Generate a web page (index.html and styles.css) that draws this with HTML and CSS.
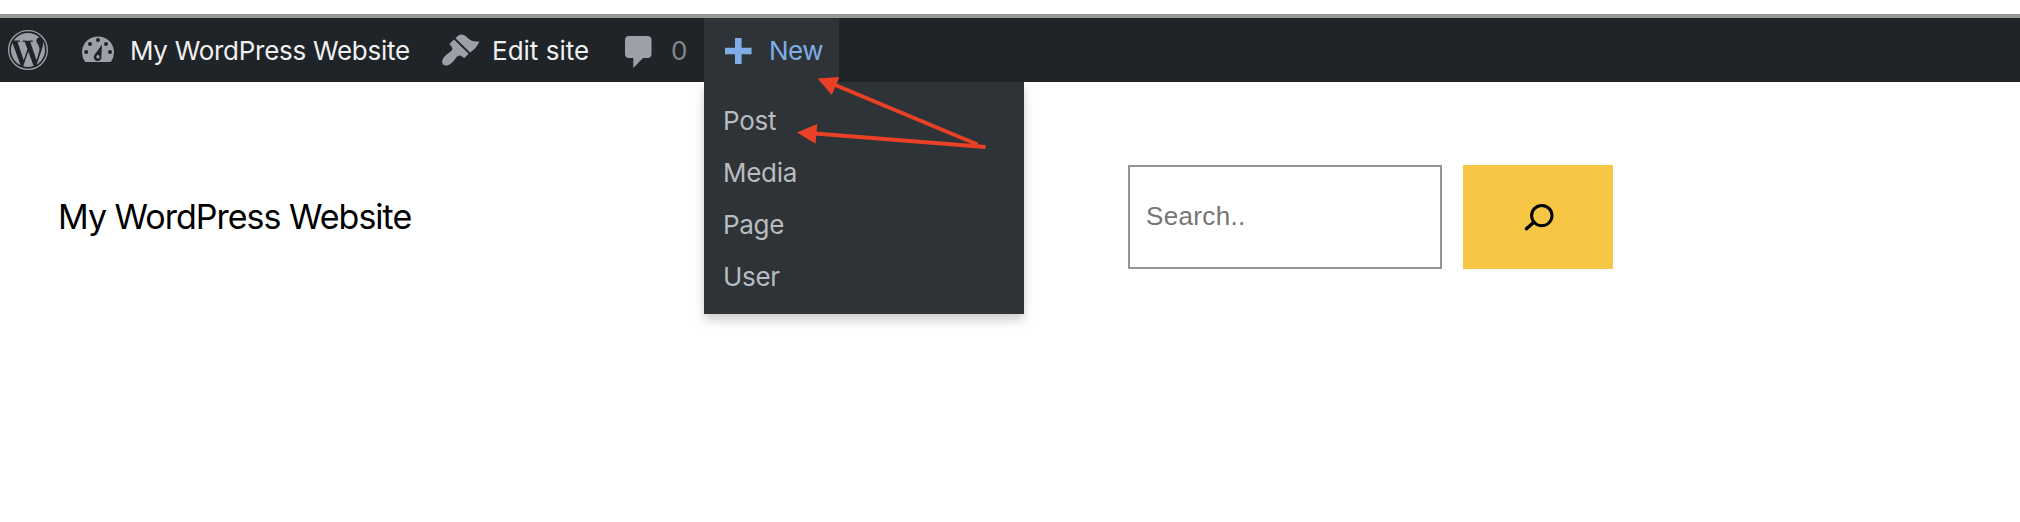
FILE: index.html
```html
<!DOCTYPE html>
<html lang="en">
<head>
<meta charset="utf-8">
<title>My WordPress Website</title>
<link rel="stylesheet" href="styles.css">
</head>
<body>
<nav class="adminbar">
  <a class="item item-logo">
    <svg width="40" height="40" viewBox="0 0 24 24" fill="#9ca1a7">
      <circle cx="12" cy="12" r="11.6" fill="none" stroke="#9ca1a7" stroke-width=".8"/>
      <g transform="translate(12 12) scale(.945) translate(-12 -12)">
        <path d="M21.469 6.825c.84 1.537 1.318 3.3 1.318 5.175 0 3.979-2.156 7.456-5.363 9.325l3.295-9.527c.615-1.54.82-2.771.82-3.864 0-.405-.026-.78-.07-1.11m-7.981.105c.647-.03 1.232-.105 1.232-.105.582-.075.514-.93-.067-.899 0 0-1.755.135-2.88.135-1.064 0-2.85-.15-2.85-.15-.585-.03-.661.855-.075.885 0 0 .54.061 1.125.09l1.68 4.605-2.37 7.08L5.354 6.9c.649-.03 1.234-.1 1.234-.1.585-.075.516-.93-.065-.896 0 0-1.746.138-2.874.138-.2 0-.438-.008-.69-.015C4.911 3.15 8.235 1.215 12 1.215c2.809 0 5.365 1.072 7.286 2.833-.046-.003-.091-.009-.141-.009-1.06 0-1.812.923-1.812 1.914 0 .89.513 1.643 1.06 2.531.411.72.89 1.643.89 2.977 0 .915-.354 1.994-.821 3.479l-1.075 3.585-3.9-11.61.001.014zM12 22.784c-1.059 0-2.081-.153-3.048-.437l3.237-9.406 3.315 9.087c.024.053.05.101.078.149-1.12.393-2.325.609-3.582.609M1.211 12c0-1.564.336-3.05.935-4.39L7.29 21.709C3.694 19.96 1.212 16.271 1.211 12"/>
      </g>
    </svg>
  </a>
  <a class="item item-site">
    <svg width="32" height="28" viewBox="0 0 32 28">
      <path d="M3.2 26A16 16 0 1 1 28.8 26Z" fill="#9ca1a7"/>
      <g fill="#1f2428">
        <circle cx="16" cy="4" r="2"/><circle cx="8" cy="8" r="2"/><circle cx="24" cy="8" r="2"/>
        <circle cx="4.2" cy="16" r="2"/><circle cx="28" cy="16" r="2"/>
        <path d="M20 8.5L19.4 20.2A3.9 3.9 0 1 1 12.4 19Z"/>
      </g>
      <circle cx="16" cy="20.8" r="1.7" fill="#9ca1a7"/>
    </svg>
    <span class="label label-site">My WordPress Website</span>
  </a>
  <a class="item item-edit">
    <svg width="38" height="32" viewBox="0 0 38 32" fill="#9ca1a7">
      <path d="M13.6 4.2C15.6 1.6 17.2.4 19.6.4C26.5.8 25.5 8.8 37.4 7.4C35.8 11.6 32.5 15.5 28 18.5Z"/>
      <path d="M12 5.6L26.6 19.8L22.8 23.7C21.5 24.2 20.5 22.7 18.2 21.6C15.4 21.6 14.3 23.5 12 26.6C9.3 30.1 6.6 31.5 4 31.5C1.2 31.5 0 29.8.1 27.2C.7 23.8 3.3 21.5 6.6 19C9.5 17 10.6 16.1 10.3 14.2C10 12.3 7.6 11.1 7.5 9.8Z"/>
    </svg>
    <span class="label label-edit">Edit site</span>
  </a>
  <a class="item item-comments">
    <svg width="27" height="32" viewBox="0 0 27 32"><path d="M4 0H22.5Q26.5 0 26.5 4V18Q26.5 22 22.5 22H18L8.3 32V22H4Q0 22 0 18V4Q0 0 4 0Z" fill="#9ca1a7"/></svg>
    <span class="label label-count">0</span>
  </a>
  <div class="item item-new">
    <svg width="27" height="26" viewBox="0 0 27 26"><path d="M10 0H16.6V9.7H26.6V16.3H16.6V26H10V16.3H0V9.7H10Z" fill="#7fade6"/></svg>
    <span class="label label-new">New</span>
    <ul class="menu">
      <li>Post</li>
      <li>Media</li>
      <li>Page</li>
      <li>User</li>
    </ul>
  </div>
</nav>
<header class="site-header">
  <h1 class="site-title">My WordPress Website</h1>
  <form class="search">
    <div class="field">Search..</div>
    <button class="submit" type="button" aria-label="Search">
      <svg width="32" height="28" viewBox="-1 0 32 28" fill="none" stroke="#000" stroke-linecap="round"><circle cx="18.8" cy="12.6" r="10.2" stroke-width="3"/><path d="M10.8 19.2L3.5 25.8" stroke-width="3.4"/></svg>
    </button>
  </form>
</header>
<svg class="arrows" width="190" height="74" viewBox="0 0 190 74">
  <g fill="#ea4126">
    <path d="M20.5 5.5L42.4 4L34.8 22Z"/>
    <path d="M0 59.5L20.3 51L18.5 70.7Z"/>
  </g>
  <g fill="none" stroke="#ea4126" stroke-width="4"><path d="M37 11.5L180.5 71.5"/><path d="M18 60.4L188.5 74"/></g>
</svg>
</body>
</html>
```
FILE: styles.css
```css
* { box-sizing: border-box; }
html { height: 522px; background: #fff; }
body { display: flow-root; height: 522px; margin: 0; font-family: Inter, "Liberation Sans", sans-serif; }
svg { display: block; flex: none; }

.adminbar {
  display: flex;
  height: 68px;
  margin-top: 14px;
  border-top: 4px solid #979997;
  background: #1f2428;
  font-size: 26px;
  line-height: 64px;
  color: #f0f0f1;
}
.item { display: flex; align-items: center; height: 64px; }
.item-logo { width: 82px; padding-left: 8px; }
.item-site { width: 360px; gap: 16px; }
.item-edit { width: 183px; gap: 12px; }
.item-edit svg { margin-top: -1px; }
.item-comments { width: 79px; gap: 19px; }
.item-comments svg { margin-top: 4px; }
.item-new { position: relative; width: 135px; padding-left: 21px; gap: 17px; background: #2e3337; color: #7fade6; }
.item-new svg { margin-top: 2px; }
.label { display: block; padding-top: 2px; white-space: nowrap; }
.label-site { letter-spacing: -.28px; }
.label-new { letter-spacing: -.5px; }
.label-count { color: #85888b; }

.menu {
  position: absolute;
  top: 64px;
  left: 0;
  width: 320px;
  height: 232px;
  margin: 0;
  padding: 13px 19px;
  list-style: none;
  line-height: 52px;
  letter-spacing: -.3px;
  background: #2e3337;
  color: #b8bcc0;
  box-shadow: 0 6px 10px rgba(0, 0, 0, .2);
}

.site-header { display: flex; padding: 83px 0 0 58px; }
.site-title { width: 1070px; margin: 0; font-size: 34px; font-weight: 400; line-height: 104px; letter-spacing: -1px; color: #000; }
.search { display: flex; gap: 21px; }
.field {
  width: 314px;
  height: 104px;
  padding-left: 16px;
  border: 2px solid #949494;
  font: 26px/98px "Liberation Sans", Arial, sans-serif;
  letter-spacing: .35px;
  color: #757575;
}
.submit { display: flex; align-items: center; justify-content: center; width: 150px; height: 104px; padding: 0; border: 0; background: #f6c644; }

.arrows { position: absolute; left: 797px; top: 73px; overflow: visible; }
```
